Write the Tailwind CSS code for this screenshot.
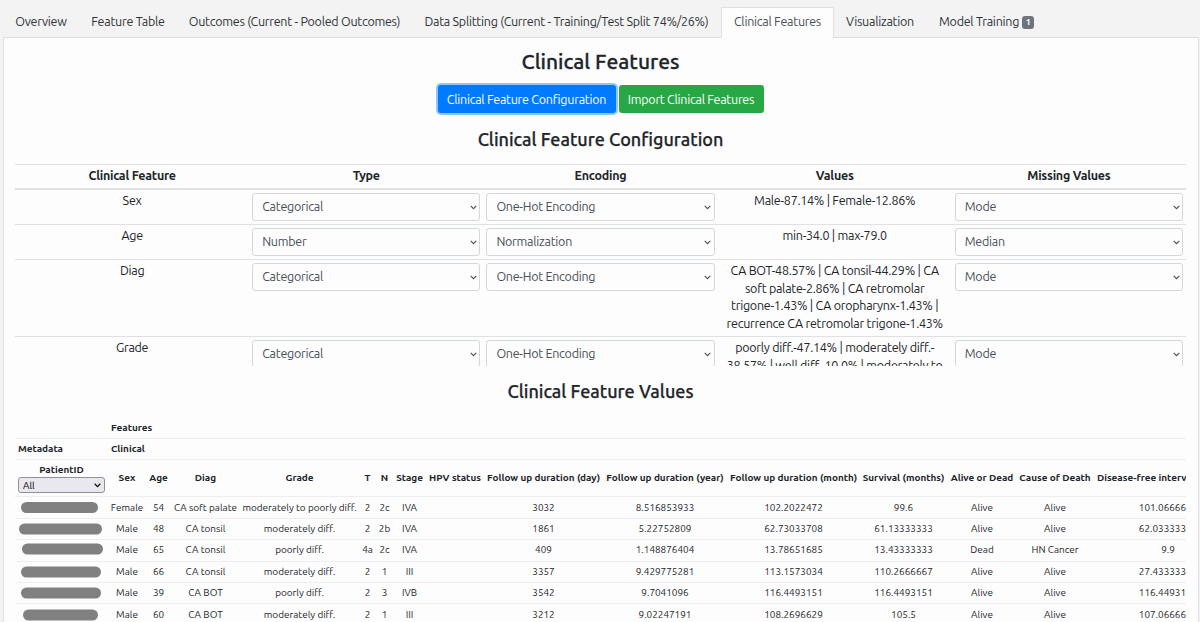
<!DOCTYPE html>
<html lang="en">
    <head>
        <meta charset="utf-8">
        <title>Clinical Features</title>
        <script src="https://cdn.jsdelivr.net/npm/@tailwindcss/browser@4"></script>
    </head>
    <body class="h-[622px] overflow-hidden bg-[#f3f3f3] pl-[3px] pr-[1px] font-['Ubuntu','Noto_Sans',sans-serif] text-[12.5px] leading-[17.7px] tracking-[-0.26px] text-[#212529]">
        <nav class="flex h-[38px] items-end whitespace-nowrap text-center text-[#2f3337]">
            <a class="h-[31px] w-[76px] pt-[6px]">Overview</a>
            <a class="h-[31px] w-[98px] pt-[6px]">Feature Table</a>
            <a class="h-[31px] w-[235px] pt-[6px]">Outcomes (Current - Pooled Outcomes)</a>
            <a class="h-[31px] w-[309px] pt-[6px]">Data Splitting (Current - Training/Test Split 74%/26%)</a>
            <a class="z-10 h-[31px] w-[113px] border border-b-0 border-[#dee2e6] bg-[#fdfdfd] pt-[5px] text-[#495057]">Clinical Features</a>
            <a class="h-[31px] w-[92px] pt-[6px]">Visualization</a>
            <a class="flex h-[31px] items-start gap-[3px] pl-[13px] pt-[6px]">Model Training <span class="mt-[3px] h-[13px] w-[12px] rounded-[3px] bg-[#6c757d] text-[9px] font-bold leading-[13px] text-white">1</span></a>
        </nav>
        <main class="-mt-px h-[586px] border border-[#dddfe1] bg-[#fdfdfd] pl-[11px] pr-[12px]">
            <h1 class="pt-[11px] text-center text-[21px] font-medium leading-[24px] tracking-normal [-webkit-text-stroke:0.3px]">Clinical Features</h1>
            <div class="mt-[12px] flex h-[28px] justify-center gap-[3px] text-white">
                <button class="h-[28px] w-[178px] whitespace-nowrap rounded-[3px] bg-[#007bff] pt-[2px] shadow-[0_0_0_2px_#8fc6ff]">Clinical Feature Configuration</button>
                <button class="h-[28px] w-[145px] whitespace-nowrap rounded-[3px] bg-[#28a745] pt-[2px]">Import Clinical Features</button>
            </div>
            <h2 class="mt-[15px] text-center text-[18px] font-medium leading-[22px] tracking-normal [-webkit-text-stroke:0.25px]">Clinical Feature Configuration</h2>
            <div class="mt-[14px] h-[202px] overflow-hidden">
                <table class="w-full table-fixed border-separate border-spacing-0 text-center">
                    <thead>
                        <tr class="h-[26px] [&>th]:border-t [&>th]:border-b-2 [&>th]:border-[#dee2e6] [&>th]:pb-[2px]">
                            <th>Clinical Feature</th>
                            <th>Type</th>
                            <th>Encoding</th>
                            <th>Values</th>
                            <th>Missing Values</th>
                        </tr>
                    </thead>
                    <tbody id="config"></tbody>
                </table>
            </div>
            <h2 class="mt-[14px] text-center text-[18px] font-medium leading-[22px] tracking-normal [-webkit-text-stroke:0.25px]">Clinical Feature Values</h2>
            <div class="mt-[15px] h-[210px] overflow-hidden">
                <table class="w-[1228px] table-fixed border-separate border-spacing-0 whitespace-nowrap text-center text-[9.95px] leading-[14px] tracking-normal [&_td]:border-b [&_td]:border-[#eeeeee] [&_th]:border-b [&_th]:border-[#eeeeee]">
                    <colgroup>
                        <col class="w-[93px]"><col class="w-[38px]"><col class="w-[25px]"><col class="w-[69px]"><col class="w-[119px]">
                        <col class="w-[17px]"><col class="w-[17px]"><col class="w-[33px]"><col class="w-[58px]"><col class="w-[119px]">
                        <col class="w-[124px]"><col class="w-[133px]"><col class="w-[87px]"><col class="w-[70px]"><col class="w-[76px]"><col class="w-[150px]">
                    </colgroup>
                    <thead>
                        <tr class="h-[22px] text-left"><th></th><th class="pl-[3px]" colspan="15">Features</th></tr>
                        <tr class="h-[21.4px] text-left"><th class="pl-[3px]">Metadata</th><th class="pl-[3px]" colspan="15">Clinical</th></tr>
                        <tr class="h-[37px]">
                            <th class="px-[3px]">
                                PatientID
                                <span class="relative block">
                                    <select class="block h-[16px] w-[87px] appearance-none rounded-[3px] border border-[#8f8f9d] bg-[#e9e9ed] pl-[4px] text-[10px] font-normal leading-[13px] text-black"><option>All</option></select>
                                    <svg class="absolute right-[4px] top-[6px] h-[5px] w-[7px]" viewBox="0 0 7 5" fill="none" stroke="#111" stroke-width="1.3"><path d="M.7.8 3.5 3.6 6.3.8"/></svg>
                                </span>
                            </th>
                            <th>Sex</th><th>Age</th><th>Diag</th><th>Grade</th><th>T</th><th>N</th><th>Stage</th><th>HPV status</th>
                            <th>Follow up duration (day)</th><th>Follow up duration (year)</th><th>Follow up duration (month)</th>
                            <th>Survival (months)</th><th>Alive or Dead</th><th>Cause of Death</th><th>Disease-free interval (months)</th>
                        </tr>
                    </thead>
                    <tbody id="values"></tbody>
                </table>
            </div>
        </main>
    </body>
    <script>
    const features = [
        ['Sex', 'Categorical', 'One-Hot Encoding', 'Male-87.14% | Female-12.86%', 'Mode'],
        ['Age', 'Number', 'Normalization', 'min-34.0 | max-79.0', 'Median'],
        ['Diag', 'Categorical', 'One-Hot Encoding', 'CA BOT-48.57% | CA tonsil-44.29% | CA<br>soft palate-2.86% | CA retromolar<br>trigone-1.43% | CA oropharynx-1.43% |<br>recurrence CA retromolar trigone-1.43%', 'Mode'],
        ['Grade', 'Categorical', 'One-Hot Encoding', 'poorly diff.-47.14% | moderately diff.-<br>38.57% | well diff.-10.0% | moderately to', 'Mode']
    ];

    // x offset, width and vertical shift of the bar that hides each patient id
    const patients = [
        [[6, 77, 0], 'Female', 54, 'CA soft palate', 'moderately to poorly diff.', '2', '2c', 'IVA', '', '3032', '8.516853933', '102.2022472', '99.6', 'Alive', 'Alive', '101.0666667'],
        [[4, 83, 0.5], 'Male', 48, 'CA tonsil', 'moderately diff.', '2', '2b', 'IVA', '', '1861', '5.22752809', '62.73033708', '61.13333333', 'Alive', 'Alive', '62.03333333'],
        [[7, 81, -1.5], 'Male', 65, 'CA tonsil', 'poorly diff.', '4a', '2c', 'IVA', '', '409', '1.148876404', '13.78651685', '13.43333333', 'Dead', 'HN Cancer', '9.9'],
        [[6, 80, 0.5], 'Male', 66, 'CA tonsil', 'moderately diff.', '2', '1', 'III', '', '3357', '9.429775281', '113.1573034', '110.2666667', 'Alive', 'Alive', '27.43333333'],
        [[6, 80, -0.5], 'Male', 39, 'CA BOT', 'poorly diff.', '2', '3', 'IVB', '', '3542', '9.7041096', '116.4493151', '116.4493151', 'Alive', 'Alive', '116.4493151'],
        [[8, 75, 0.5], 'Male', 60, 'CA BOT', 'moderately diff.', '2', '1', 'III', '', '3212', '9.02247191', '108.2696629', '105.5', 'Alive', 'Alive', '107.0666667']
    ];

    function select(value)
    {
        return `<div class="relative">
            <select class="block h-[28px] w-full appearance-none rounded-[3px] border border-[#d3d8dd] bg-[#fdfdfd] pl-[9px] text-[12.5px] tracking-[-0.26px] text-[#495057]"><option>${value}</option></select>
            <svg class="absolute right-[3.5px] top-[12px] h-[5px] w-[7px]" viewBox="0 0 7 5" fill="none" stroke="#495057" stroke-width="1.1"><path d="M.7.8 3.5 3.6 6.3.8"/></svg>
        </div>`;
    }

    document.getElementById('config').innerHTML = features.map(f => `
        <tr class="h-[35px] align-top [&>td]:border-b [&>td]:border-[#dee2e6] [&>td]:px-[3px]">
            <td class="pt-[2px]">${f[0]}</td>
            <td class="pt-[3px]">${select(f[1])}</td>
            <td class="pt-[3px]">${select(f[2])}</td>
            <td class="whitespace-nowrap pt-[2px] pb-[3px]">${f[3]}</td>
            <td class="pt-[3px]">${select(f[4])}</td>
        </tr>`).join('');

    document.getElementById('values').innerHTML = patients.map(p => `
        <tr class="h-[21.4px]">
            <td><div class="h-[11px] rounded-full bg-[#808080]" style="width:${p[0][1]}px;margin-left:${p[0][0]}px;transform:translateY(${p[0][2]}px)"></div></td>
            ${p.slice(1).map(v => `<td>${v}</td>`).join('')}
        </tr>`).join('');
    </script>
</html>
